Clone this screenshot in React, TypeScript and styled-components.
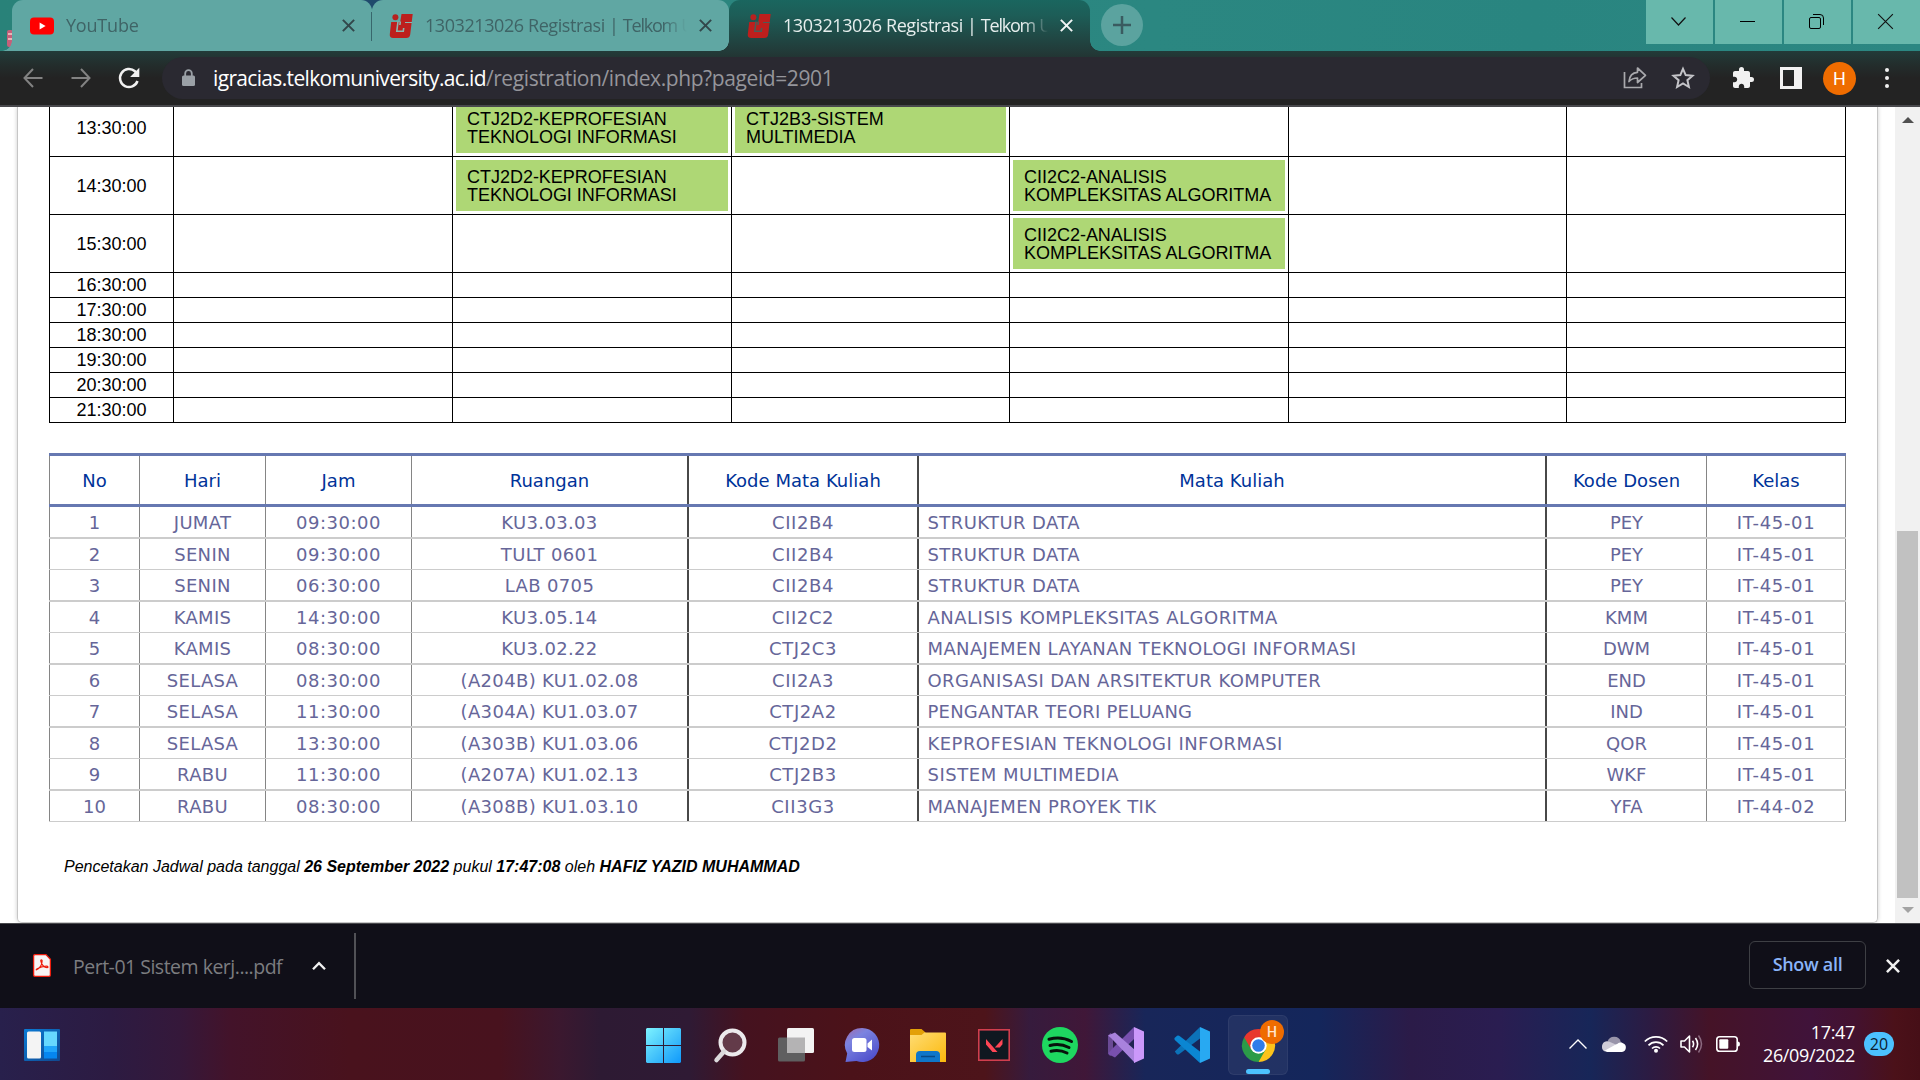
import React from "react";
import styled, { createGlobalStyle, css } from "styled-components";

const uiFont = `"Open Sans", "Noto Sans", sans-serif`;
const arial = `"Liberation Sans", Arial, sans-serif`;
const verdana = `"DejaVu Sans", Verdana, sans-serif`;

const GlobalStyle = createGlobalStyle`
  * { box-sizing: border-box; }
  body { margin: 0; overflow: hidden; background: #fff; }
  svg { display: block; flex: none; overflow: visible; }
`;

const Screen = styled.div`
  width: 1920px;
  height: 1080px;
  display: flex;
  flex-direction: column;
  overflow: hidden;
  font-family: ${uiFont};
`;

/* ---------- Tab strip ---------- */

const TabStrip = styled.div`
  height: 51px;
  flex: none;
  display: flex;
  padding-left: 12px;
  position: relative;
  background: linear-gradient(90deg, #298279 0, #2b8781 60%, #298580 80%, #2c8782 100%);
`;

const StripArt = styled.svg`
  position: absolute;
  left: 0;
  top: 0;
`;

const flare = (color: string) => css`
  &::before,
  &::after {
    content: "";
    position: absolute;
    bottom: 0;
    width: 10px;
    height: 10px;
  }
  &::before {
    left: -10px;
    background: radial-gradient(circle at 0 0, transparent 9.5px, ${color} 10px);
  }
  &::after {
    right: -10px;
    background: radial-gradient(circle at 100% 0, transparent 9.5px, ${color} 10px);
  }
`;

const TabBox = styled.div<{ $width: number; $active?: boolean; $start?: number }>`
  position: relative;
  z-index: ${(p) => (p.$active ? 2 : 1)};
  width: ${(p) => p.$width}px;
  flex: none;
  height: 51px;
  display: flex;
  align-items: center;
  padding: 0 17px 0 ${(p) => p.$start ?? 18}px;
  border-radius: 11px 11px 0 0;
  color: ${(p) => (p.$active ? "#e6eeed" : "#3f6466")};
  background: ${(p) =>
    p.$active ? "linear-gradient(#1a665f 0, #1d5d57 30%, #223b39 100%)" : "#60a7a3"};
  ${(p) => flare(p.$active ? "#223b39" : "#60a7a3")}
`;

const TabTitle = styled.div<{ $spacing: number }>`
  flex: 1;
  min-width: 0;
  margin: 0 12px 1px;
  white-space: nowrap;
  font-size: 18px;
  line-height: 26px;
  letter-spacing: ${(p) => p.$spacing}px;
  mask-image: linear-gradient(90deg, #000 calc(100% - 24px), transparent 100%);
`;

const SiteName = styled.span`
  letter-spacing: -1.2px;
`;

const TabDivider = styled.i`
  position: absolute;
  z-index: 3;
  right: 0;
  top: 12px;
  width: 1px;
  height: 29px;
  background: #38676c;
`;

const NewTab = styled.div`
  width: 42px;
  height: 42px;
  margin: 4px 0 0 11px;
  border-radius: 50%;
  display: grid;
  place-items: center;
  background: #5ba39f;
`;

const WindowButtons = styled.div`
  margin-left: auto;
  display: flex;
  gap: 2px;
  height: 44px;
`;

const WindowButton = styled.div`
  width: 67px;
  display: grid;
  place-items: center;
  padding: 0 2px 1px 0;
  background: #68b8ac;
`;

/* ---------- Toolbar ---------- */

const Toolbar = styled.div`
  height: 56px;
  flex: none;
  display: flex;
  align-items: center;
  padding: 0 27px 0 21px;
  border-bottom: 2px solid #48484c;
  background: linear-gradient(#223b39 0, #232d2c 14px, #232323 27px);
`;

const NavGroup = styled.div`
  display: flex;
  align-items: center;
  gap: 24px;
  width: 141px;
`;

const Omnibox = styled.div`
  width: 1548px;
  height: 42px;
  border-radius: 21px;
  display: flex;
  align-items: center;
  padding: 0 15px 0 20px;
  background: #2a2931;
`;

const Url = styled.div`
  margin-left: 18px;
  flex: 1;
  font-size: 21px;
  line-height: 30px;
  letter-spacing: -0.4px;
  white-space: nowrap;
  color: #95959b;
  b {
    font-weight: 400;
    letter-spacing: -0.66px;
    color: #fff;
  }
`;

const OmniActions = styled.div`
  display: flex;
  align-items: center;
  gap: 24px;
`;

const ToolbarActions = styled.div`
  flex: 1;
  display: flex;
  align-items: center;
  margin-left: 21px;
  gap: 25px;
`;

const Avatar = styled.div`
  width: 33px;
  height: 33px;
  border-radius: 50%;
  margin-left: -4px;
  display: grid;
  place-items: center;
  background: #ef6c00;
  color: #fff;
  font: 400 18px/33px Roboto, sans-serif;
`;

const Dots = styled.div`
  margin-left: 4px;
  display: grid;
  gap: 4px;
  i {
    width: 4px;
    height: 4px;
    border-radius: 50%;
    background: #f1f1f1;
  }
`;

/* ---------- Page ---------- */

const Viewport = styled.div`
  height: 816px;
  flex: none;
  display: flex;
  overflow: hidden;
  background: #fff;
`;

const Card = styled.main`
  width: 1861px;
  height: 816px;
  margin-left: 17px;
  padding: 0 31px;
  border: 1px solid #c6c6c6;
  border-top: 0;
  border-radius: 0 0 5px 5px;
  box-shadow: 0 0 4px #ccc;
  display: flex;
  flex-direction: column;
`;

const ScrollTrack = styled.div`
  width: 25px;
  margin-left: auto;
  display: flex;
  flex-direction: column;
  align-items: center;
  background: #f1f1f1;
`;

const ScrollThumb = styled.div`
  width: 21px;
  height: 367px;
  margin-top: 408px;
  background: #c1c1c1;
`;

const ScrollArrow = styled.i<{ $up?: boolean }>`
  margin-top: ${(p) => (p.$up ? 10 : 9)}px;
  width: 0;
  height: 0;
  border: 6px solid transparent;
  ${(p) =>
    p.$up
      ? "border-top: 0; border-bottom-color: #505050;"
      : "border-bottom: 0; border-top-color: #a3a3a3;"}
`;

const Schedule = styled.div`
  width: 1797px;
  margin-top: -8px;
  flex: none;
  border-left: 1px solid #000;
  font: 18px/18px ${arial};
  color: #000;
`;

const ScheduleRow = styled.div<{ $tall?: boolean }>`
  display: grid;
  grid-template-columns: 124px 279px 279px 278px 279px 278px 279px;
  height: ${(p) => (p.$tall ? 58 : 25)}px;
`;

const Slot = styled.div`
  border-right: 1px solid #000;
  border-bottom: 1px solid #000;
  padding: 3px;
`;

const TimeSlot = styled(Slot)`
  display: flex;
  align-items: center;
  justify-content: center;
  padding: 0;
`;

const Course = styled.div`
  height: 100%;
  padding: 0 10px 0 11px;
  display: flex;
  align-items: center;
  white-space: pre;
  letter-spacing: -0.02px;
  background: #aed775;
`;

const InfoTable = styled.div`
  margin-top: 30px;
  flex: none;
  width: 1797px;
  font: 18px/24px ${verdana};
  color: #666699;
`;

const infoColumns = "91px 126px 146px 277px 230px 628px 160px 139px";

const InfoHead = styled.div`
  display: grid;
  grid-template-columns: ${infoColumns};
  height: 54px;
  border-top: 3px solid #6678b1;
  border-bottom: 3px solid #6678b1;
  color: #003399;
`;

const InfoRow = styled.div<{ $thick: boolean }>`
  display: grid;
  grid-template-columns: ${infoColumns};
  height: ${(p) => (p.$thick ? 32 : 31)}px;
  border-bottom: ${(p) => (p.$thick ? 2 : 1)}px solid #ccc;
`;

const InfoCell = styled.div<{ $spacing: number; $dark?: boolean; $left?: boolean; $first?: boolean }>`
  display: flex;
  align-items: center;
  justify-content: ${(p) => (p.$left ? "flex-start" : "center")};
  padding: 2px 0 0 ${(p) => (p.$left ? 8.5 : 0)}px;
  border-right: ${(p) => (p.$dark ? "2px solid #484848" : "1px solid #858585")};
  border-left: ${(p) => (p.$first ? "1px solid #858585" : "0")};
  letter-spacing: ${(p) => p.$spacing}px;
  white-space: nowrap;
`;

const PrintNote = styled.p`
  margin: 34px 0 0 15px;
  font: italic 16px/22px ${arial};
  color: #000;
  white-space: nowrap;
`;

/* ---------- Download shelf ---------- */

const Shelf = styled.div`
  height: 85px;
  flex: none;
  display: flex;
  align-items: center;
  padding: 0 20px 1px 33px;
  border-top: 1px solid #48484c;
  background: #100f18;
`;

const FileName = styled.div`
  margin: 2px 28px 0 22px;
  width: 211px;
  font-size: 19.5px;
  line-height: 28px;
  letter-spacing: -0.5px;
  color: #7c7d80;
  white-space: nowrap;
`;

const ShelfDivider = styled.i`
  width: 2px;
  height: 66px;
  margin-left: 28px;
  background: #515156;
`;

const ShowAll = styled.div`
  margin-left: auto;
  margin-right: 20px;
  width: 117px;
  height: 48px;
  margin-bottom: 1px;
  border: 1px solid #3e3f44;
  border-radius: 6px;
  display: flex;
  align-items: center;
  justify-content: center;
  padding-bottom: 2px;
  font-size: 18px;
  font-weight: 600;
  letter-spacing: -0.3px;
  color: #8ab4f8;
`;

/* ---------- Taskbar ---------- */

const Taskbar = styled.div`
  height: 72px;
  flex: none;
  display: flex;
  align-items: center;
  background: linear-gradient(
    90deg,
    #28204c 0,
    #2c1b42 110px,
    #35183a 180px,
    #43132a 230px,
    #49121d 350px,
    #48121e 500px,
    #3b182f 560px,
    #2d1a33 600px,
    #2f1a34 690px,
    #45121f 745px,
    #4b1219 850px,
    #4d141a 985px,
    #361b3d 1030px,
    #401738 1085px,
    #182659 1145px,
    #14265b 1320px,
    #2b1b48 1410px,
    #2a1d51 1500px,
    #172658 1590px,
    #2c1b42 1650px,
    #451327 1710px,
    #40133a 1810px,
    #43122f 1855px,
    #4b1119 1895px,
    #460f17 1920px
  );
`;

const WidgetsButton = styled.div`
  margin: 2px 0 0 24px;
  width: 607px;
`;

const Apps = styled.div`
  display: flex;
`;

const AppButton = styled.div<{ $active?: boolean }>`
  width: ${(p) => (p.$active ? 60 : 66)}px;
  height: 60px;
  margin: 2px ${(p) => (p.$active ? 3 : 0)}px 0;
  position: relative;
  display: grid;
  place-items: center;
  ${(p) =>
    p.$active &&
    `background: rgba(255,255,255,.06); border: 1px solid rgba(255,255,255,.05); border-radius: 6px;`}
`;

const AppBadge = styled.span`
  position: absolute;
  left: 31px;
  top: 4px;
  width: 24px;
  height: 24px;
  border-radius: 50%;
  background: #ef6c00;
  color: #ffe4cc;
  text-align: center;
  font: 500 14px/24px Roboto, sans-serif;
`;

const RunningMark = styled.i`
  position: absolute;
  left: 17px;
  bottom: 0;
  width: 24px;
  height: 5px;
  border-radius: 3px;
  background: #4cc2ff;
`;

const Tray = styled.div`
  margin-left: auto;
  margin-right: 26px;
  display: flex;
  align-items: center;
`;

const TrayIcon = styled.div<{ $gap: number }>`
  margin-right: ${(p) => p.$gap}px;
`;

const Clock = styled.div`
  width: 100px;
  text-align: right;
  font-size: 18px;
  line-height: 23px;
  letter-spacing: -0.35px;
  color: #fff;
  white-space: nowrap;
`;

const Notifications = styled.div`
  margin-left: 9px;
  width: 30px;
  height: 24px;
  border-radius: 12px;
  background: #4cc2ff;
  color: #0c2030;
  font-size: 16px;
  line-height: 24px;
  text-align: center;
`;

/* ---------- Icons ---------- */

const Cross = ({ size, color, width = 2 }: { size: number; color: string; width?: number }) => (
  <svg width={size} height={size} viewBox="0 0 12 12">
    <path d="M0.8 0.8 11.2 11.2M11.2 0.8 0.8 11.2" stroke={color} strokeWidth={(width * 12) / size} />
  </svg>
);

const YouTubeIcon = () => (
  <svg width="24" height="24" viewBox="0 0 24 24">
    <rect y="3.6" width="24" height="16.8" rx="4" fill="#f00" />
    <path d="M9.6 8.6v6.8l6-3.4z" fill="#fff" />
  </svg>
);

const IgIcon = ({ cut }: { cut: string }) => (
  <svg width="24" height="24" viewBox="0 0 24 24">
    <circle cx="6.4" cy="3.2" r="3" fill="#b7211f" />
    <path d="M12.500 0h11.200L22.700 8 21.200 20.500q-.5 3.500-4 3.500H4.200Q.3 24 .8 20.300L2.200 8h9z" fill="#bd1f1d" />
    <path d="M9 7.500 7.800 17.200h6.500l.4-3.200M11.300 7.500l-.4 3.500" fill="none" stroke={cut} strokeWidth="1.600" />
    <path d="M16 8.500h7" stroke={cut} strokeWidth="1" />
  </svg>
);

const BackIcon = ({ flip }: { flip?: boolean }) => (
  <svg width="24" height="24" viewBox="0 0 24 24">
    <path
      d="M21.500 12H4M12 3 3.500 12l8.500 9"
      transform={flip ? "translate(24 0) scale(-1 1)" : undefined}
      fill="none"
      stroke="#828282"
      strokeWidth="2"
    />
  </svg>
);

const ReloadIcon = () => (
  <svg width="24" height="24" viewBox="0 0 24 24">
    <path d="M20.500 15A9 9 0 1 1 18 5.300L20.500 8" fill="none" stroke="#f1f1f1" strokeWidth="2.500" />
    <path d="M22.300 1.800v9.200h-9.200z" fill="#f1f1f1" />
  </svg>
);

const LockIcon = () => (
  <svg width="13" height="18" viewBox="0 0 13 18">
    <rect y="6.500" width="13" height="10.500" rx="1.500" fill="#9aa0a6" />
    <path d="M3.200 7V4.500a3.300 3.300 0 0 1 6.600 0V7" fill="none" stroke="#9aa0a6" strokeWidth="1.800" />
  </svg>
);

const ShareIcon = () => (
  <svg width="24" height="24" viewBox="0 0 24 24">
    <path d="M1.500 6v15.500H18.500V17" fill="none" stroke="#a9a9ad" strokeWidth="1.700" />
    <path
      d="M6 15.500C6.500 9.500 10 6.600 14.500 6.300V2l8 7.300-8 7.200V12c-3.700 0-6.300 1-8.500 3.500z"
      fill="none"
      stroke="#a9a9ad"
      strokeWidth="1.700"
      strokeLinejoin="round"
    />
  </svg>
);

const StarIcon = () => (
  <svg width="24" height="24" viewBox="0 0 24 24">
    <path
      d="M12 2.800 14.700 9.100 21.500 9.700 16.400 14.200 17.900 21 12 17.400 6.100 21 7.600 14.200 2.500 9.700 9.300 9.100z"
      fill="none"
      stroke="#c4c4c8"
      strokeWidth="2"
    />
  </svg>
);

const PuzzleIcon = () => (
  <svg width="24" height="24" viewBox="0 0 24 24">
    <path
      d="M20.500 11H19V7c0-1.100-.9-2-2-2h-4V3.500a2.500 2.500 0 0 0-5 0V5H4c-1.100 0-1.990.9-1.990 2v3.800H3.500c1.490 0 2.700 1.210 2.700 2.700s-1.210 2.700-2.700 2.700H2V20c0 1.100.9 2 2 2h3.800v-1.500c0-1.490 1.210-2.700 2.700-2.700s2.700 1.210 2.700 2.700V22H17c1.100 0 2-.9 2-2v-4h1.500a2.500 2.500 0 0 0 0-5z"
      fill="#f1f1f1"
    />
  </svg>
);

const PanelIcon = () => (
  <svg width="22" height="22" viewBox="0 0 22 22">
    <path fillRule="evenodd" d="M0 0h22v22H0zM3 3v16h11V3z" fill="#f1f1f1" />
  </svg>
);

const PdfIcon = () => (
  <svg width="18" height="23" viewBox="0 0 18 23">
    <path d="M2 .6h11l4.400 4.600V21q0 1.400-1.400 1.400H2Q.6 22.400.6 21V2Q.6.6 2 .6z" fill="#f7f5f5" stroke="#ee1c0c" strokeWidth="1.300" />
    <path
      d="M3.500 15.800c3-1.600 5.500-5.300 5.600-8.800 0-1.800-1.500-1.500-1.300 0 .6 3.500 3.300 6.700 6.300 6.700 1.500-.2 1-1.500-.6-1.500-3.200 0-6.700 1-9.300 2.600-.9.600-1.300 1.300-.7 1z"
      fill="none"
      stroke="#ee1c0c"
      strokeWidth="1.200"
    />
  </svg>
);

const WidgetsIcon = () => (
  <svg width="36" height="32" viewBox="0 0 36 32">
    <defs>
      <linearGradient id="wd" x2="1" y2="1">
        <stop stopColor="#0a7bd6" />
        <stop offset="1" stopColor="#11488f" />
      </linearGradient>
    </defs>
    <rect width="36" height="32" rx="1" fill="url(#wd)" />
    <rect x="3" y="2.500" width="14" height="27" rx="1.500" fill="#f4f4f4" />
    <path d="M20 2.500h13V17H20z" fill="#66d8ff" />
    <path d="M20 17h13v6H20z" fill="#1fa5fb" />
    <path d="M20 23h13v6.500H20z" fill="#0586f0" />
  </svg>
);

const StartIcon = () => (
  <svg width="36" height="35" viewBox="0 0 36 35">
    <defs>
      <linearGradient id="st" gradientUnits="userSpaceOnUse" x1="0" y1="0" x2="35" y2="35">
        <stop stopColor="#7df3ff" />
        <stop offset=".5" stopColor="#47c5fb" />
        <stop offset="1" stopColor="#0f99fb" />
      </linearGradient>
    </defs>
    <path d="M1 0h16v17H0V1zM18 0h16l1 1v16H18zM0 18h17v17H1l-1-1zM18 18h17v16l-1 1H18z" fill="url(#st)" />
  </svg>
);

const SearchIcon = () => (
  <svg width="33" height="34" viewBox="0 0 33 34">
    <circle cx="18.500" cy="14.500" r="12" fill="#633b49" stroke="#eceaec" strokeWidth="4" />
    <path d="M10 23.500 2.500 32" stroke="#dcdadc" strokeWidth="4.500" strokeLinecap="round" />
  </svg>
);

const TaskViewIcon = () => (
  <svg width="36" height="34" viewBox="0 0 36 34">
    <rect y="9.500" width="27" height="24" rx="1.500" fill="#5f5f60" />
    <rect x="9" width="27" height="25" rx="1.500" fill="#f3f3f3" />
    <path d="M9 9.500h18V25H9z" fill="#b4b3b4" />
  </svg>
);

const ChatIcon = () => (
  <svg width="34" height="34" viewBox="0 0 34 34">
    <defs>
      <linearGradient id="ch" x2=".7" y2="1">
        <stop stopColor="#a06aaa" />
        <stop offset=".35" stopColor="#7b83e0" />
        <stop offset="1" stopColor="#4f50cc" />
      </linearGradient>
    </defs>
    <path d="M17 0a17 17 0 1 1-5.500 33L.5 34l1.700-8.500A17 17 0 0 1 17 0z" fill="url(#ch)" />
    <rect x="7" y="10" width="14.500" height="14" rx="2.500" fill="#fff" />
    <path d="M22.500 15.500 27 11.500v11L22.500 19z" fill="#fff" />
  </svg>
);

const FolderIcon = () => (
  <svg width="36" height="33" viewBox="0 0 36 33">
    <defs>
      <linearGradient id="fo" x2="1" y2="1">
        <stop stopColor="#ffdc74" />
        <stop offset="1" stopColor="#fbb90c" />
      </linearGradient>
    </defs>
    <path d="M0 1q0-1 1-1h10.500l4 3.500V8H0z" fill="#e3a008" />
    <path d="M0 6h11.500l3-2.500H35q1 0 1 1V33H0z" fill="url(#fo)" />
    <path d="M6 33v-7q0-4 4-4h16q4 0 4 4v7z" fill="#0f76c9" />
    <path d="M11 27.500h14" stroke="#084a86" strokeWidth="1.500" />
  </svg>
);

const ValorantIcon = () => (
  <svg width="32" height="32" viewBox="0 0 32 32">
    <rect x=".8" y=".8" width="30.400" height="30.400" fill="#101820" stroke="#d13e4e" strokeWidth="1.600" />
    <path d="M8 10v5.500l6.500 7.500h5zM24.500 10 16.800 18.500h5l2.700-3.200z" fill="#ff4655" />
  </svg>
);

const SpotifyIcon = () => (
  <svg width="36" height="36" viewBox="0 0 36 36">
    <circle cx="18" cy="18" r="18" fill="#1ed760" />
    <path
      d="M7 12.300q12-3.500 22.500 2.200M8 18.500q10-2.700 19 2M9 24.200q8.500-2 16 1.800"
      fill="none"
      stroke="#07130b"
      strokeWidth="3"
      strokeLinecap="round"
    />
  </svg>
);

const VisualStudioIcon = () => (
  <svg width="36" height="36" viewBox="0 0 36 36">
    <path d="M0 8.500 2.500 6 5 8v19l-3 2-2-3z" fill="#6a4a95" />
    <path d="M3.500 22.500 26 0v12L7 30.500 0 27z" fill="#7850ae" />
    <path d="M0 8.500 7 5.500 27 23v13L3 11z" fill="#a982dd" />
    <path d="M26 0 36 4.500v27L26 36z" fill="#cb98fa" />
  </svg>
);

const CodeIcon = () => (
  <svg width="36" height="36" viewBox="0 0 36 36">
    <path d="M.8 24.500 26 0v11.500L5 27.200q-1.200.9-2.300-.2z" fill="#0c72b8" />
    <path d="M.8 10.800 3 8.800q1-.8 2.200 0L26 24.500V36L.8 13q-1-1.100 0-2.200z" fill="#0b86d2" />
    <path d="M26 0 36 4.500v27L26 36z" fill="#28a9f2" />
  </svg>
);

const ChromeIcon = () => (
  <svg width="33" height="33" viewBox="-16.500 -16.500 33 33">
    <path d="M0 0-14.290-8.250A16.500 16.500 0 0 1 14.290-8.250z" fill="#e8372c" />
    <path d="M0 0 14.290-8.250A16.500 16.500 0 0 1 0 16.500z" fill="#fcc31b" />
    <path d="M0 0V16.500A16.500 16.500 0 0 1-14.290-8.250z" fill="#2b9b48" />
    <path d="M0-8.250H14.290L7.200 4.100z" fill="#fcc31b" />
    <path d="M7.200 4.100 0 16.500-7.200 4.100z" fill="#2b9b48" />
    <path d="M-7.200 4.100-14.290-8.250 0-8.250z" fill="#e8372c" />
    <circle r="8.200" fill="#fff" />
    <circle r="6.300" fill="#2f7de9" />
  </svg>
);

const CloudIcon = () => (
  <svg width="24" height="16" viewBox="0 0 24 16">
    <path d="M5.500 5.500a7 7 0 0 1 13.300.2L13 9z" fill="#9995aa" />
    <path d="M0 10.500a5.200 5.200 0 0 1 7.500-4.800L15 9 3 15.500A5 5 0 0 1 0 10.500z" fill="#cfccd8" />
    <path d="M2.500 14.800 16 7.200q2.300-1.700 5 0A4.600 4.600 0 0 1 20 16H5z" fill="#fff" />
  </svg>
);

const WifiIcon = () => (
  <svg width="24" height="18" viewBox="0 0 24 18">
    <path d="M.8 6.500a15.800 15.800 0 0 1 22.400 0M4.500 10.300a10.500 10.500 0 0 1 15 0M8 13.500a5.800 5.800 0 0 1 8 0" fill="none" stroke="#fff" strokeWidth="1.700" />
    <circle cx="12" cy="15.700" r="2" fill="#fff" />
  </svg>
);

const VolumeIcon = () => (
  <svg width="24" height="20" viewBox="0 0 24 20">
    <path d="M1 7h3.500L9.500 2v16l-5-5H1z" fill="none" stroke="#fff" strokeWidth="1.600" strokeLinejoin="round" />
    <path d="M12.500 6.700q2.200 3.300 0 6.600M15.500 4q4.200 6 0 12" fill="none" stroke="#fff" strokeWidth="1.600" />
    <path d="M18.500 1.500q6 8.500 0 17" fill="none" stroke="#8c6a80" strokeWidth="1.500" />
  </svg>
);

const BatteryIcon = () => (
  <svg width="24" height="16" viewBox="0 0 24 16">
    <rect x=".8" y=".8" width="20.400" height="14.400" rx="2.800" fill="none" stroke="#fff" strokeWidth="1.600" />
    <rect x="3.300" y="3.300" width="9" height="9.400" rx="1" fill="#fff" />
    <path d="M22 5.500q2 0 2 2.500t-2 2.500z" fill="#fff" />
  </svg>
);

/* ---------- Data ---------- */

type Entry = { time: string; tall?: boolean; courses?: Record<number, string> };

const schedule: Entry[] = [
  {
    time: "13:30:00",
    tall: true,
    courses: { 1: "CTJ2D2-KEPROFESIAN\nTEKNOLOGI INFORMASI", 2: "CTJ2B3-SISTEM\nMULTIMEDIA" },
  },
  {
    time: "14:30:00",
    tall: true,
    courses: { 1: "CTJ2D2-KEPROFESIAN\nTEKNOLOGI INFORMASI", 3: "CII2C2-ANALISIS\nKOMPLEKSITAS ALGORITMA" },
  },
  { time: "15:30:00", tall: true, courses: { 3: "CII2C2-ANALISIS\nKOMPLEKSITAS ALGORITMA" } },
  { time: "16:30:00" },
  { time: "17:30:00" },
  { time: "18:30:00" },
  { time: "19:30:00" },
  { time: "20:30:00" },
  { time: "21:30:00" },
];

const headings = ["No", "Hari", "Jam", "Ruangan", "Kode Mata Kuliah", "Mata Kuliah", "Kode Dosen", "Kelas"];

const classes = [
  ["1", "JUMAT", "09:30:00", "KU3.03.03", "CII2B4", "STRUKTUR DATA", "PEY", "IT-45-01"],
  ["2", "SENIN", "09:30:00", "TULT 0601", "CII2B4", "STRUKTUR DATA", "PEY", "IT-45-01"],
  ["3", "SENIN", "06:30:00", "LAB 0705", "CII2B4", "STRUKTUR DATA", "PEY", "IT-45-01"],
  ["4", "KAMIS", "14:30:00", "KU3.05.14", "CII2C2", "ANALISIS KOMPLEKSITAS ALGORITMA", "KMM", "IT-45-01"],
  ["5", "KAMIS", "08:30:00", "KU3.02.22", "CTJ2C3", "MANAJEMEN LAYANAN TEKNOLOGI INFORMASI", "DWM", "IT-45-01"],
  ["6", "SELASA", "08:30:00", "(A204B) KU1.02.08", "CII2A3", "ORGANISASI DAN ARSITEKTUR KOMPUTER", "END", "IT-45-01"],
  ["7", "SELASA", "11:30:00", "(A304A) KU1.03.07", "CTJ2A2", "PENGANTAR TEORI PELUANG", "IND", "IT-45-01"],
  ["8", "SELASA", "13:30:00", "(A303B) KU1.03.06", "CTJ2D2", "KEPROFESIAN TEKNOLOGI INFORMASI", "QOR", "IT-45-01"],
  ["9", "RABU", "11:30:00", "(A207A) KU1.02.13", "CTJ2B3", "SISTEM MULTIMEDIA", "WKF", "IT-45-01"],
  ["10", "RABU", "08:30:00", "(A308B) KU1.03.10", "CII3G3", "MANAJEMEN PROYEK TIK", "YFA", "IT-44-02"],
];

const columnSpacing = [0, 0.3, 0.5, 0.35, 0.6, 0.4, 0, 0.65];
const courseSpacing = [0.4, 0.4, 0.4, 0.5, 0.37, 0.42, 0.21, 0.45, 0.52, 0.4];
const darkAfter = [3, 4, 5];

/* ---------- Sections ---------- */

const Tabs = () => (
  <TabStrip>
    <StripArt width="400" height="51">
      <path d="M360 0h24l-12 9z" fill="#1f4a6c" />
      <rect x="7" y="30" width="6" height="17" rx="2" fill="#c4607a" />
      <path d="M8 34h4M8 39h4" stroke="#e9b5b5" strokeWidth="2" />
    </StripArt>
    <TabBox $width={360}>
      <YouTubeIcon />
      <TabTitle $spacing={-0.2}>YouTube</TabTitle>
      <Cross size={13} color="#32474b" />
      <TabDivider />
    </TabBox>
    <TabBox $width={357} $start={17}>
      <IgIcon cut="#8ab5ae" />
      <TabTitle $spacing={-0.42}>
        1303213026 Registrasi | <SiteName>Telkom</SiteName> U
      </TabTitle>
      <Cross size={13} color="#32474b" />
    </TabBox>
    <TabBox $width={361} $active>
      <IgIcon cut="#4f5a55" />
      <TabTitle $spacing={-0.42}>
        1303213026 Registrasi | <SiteName>Telkom</SiteName> U
      </TabTitle>
      <Cross size={13} color="#f1f5f5" />
    </TabBox>
    <NewTab>
      <svg width="18" height="18" viewBox="0 0 18 18">
        <path d="M9 0v18M0 9h18" stroke="#3a5b60" strokeWidth="2.500" />
      </svg>
    </NewTab>
    <WindowButtons>
      <WindowButton>
        <svg width="15" height="9" viewBox="0 0 15 9">
          <path d="M.5.5l7 7.500 7-7.500" fill="none" stroke="#111" strokeWidth="1.200" />
        </svg>
      </WindowButton>
      <WindowButton>
        <svg width="15" height="1" viewBox="0 0 15 1">
          <path d="M0 .5h15" stroke="#000" />
        </svg>
      </WindowButton>
      <WindowButton>
        <svg width="15" height="15" viewBox="0 0 15 15">
          <rect x=".5" y="3.500" width="11" height="11" rx="1.500" fill="none" stroke="#000" />
          <path d="M4 .5h7q3.500 0 3.500 3.500v7" fill="none" stroke="#000" />
        </svg>
      </WindowButton>
      <WindowButton>
        <Cross size={17} color="#111" width={1.1} />
      </WindowButton>
    </WindowButtons>
  </TabStrip>
);

const AddressBar = () => (
  <Toolbar>
    <NavGroup>
      <BackIcon />
      <BackIcon flip />
      <ReloadIcon />
    </NavGroup>
    <Omnibox>
      <LockIcon />
      <Url>
        <b>igracias.telkomuniversity.ac.id</b>/registration/index.php?pageid=2901
      </Url>
      <OmniActions>
        <ShareIcon />
        <StarIcon />
      </OmniActions>
    </Omnibox>
    <ToolbarActions>
      <PuzzleIcon />
      <PanelIcon />
      <Avatar>H</Avatar>
      <Dots>
        <i />
        <i />
        <i />
      </Dots>
    </ToolbarActions>
  </Toolbar>
);

const Page = () => (
  <Viewport>
    <Card>
      <Schedule>
        {schedule.map((row) => (
          <ScheduleRow key={row.time} $tall={row.tall}>
            <TimeSlot>{row.time}</TimeSlot>
            {[0, 1, 2, 3, 4, 5].map((day) => (
              <Slot key={day}>{row.courses?.[day] && <Course>{row.courses[day]}</Course>}</Slot>
            ))}
          </ScheduleRow>
        ))}
      </Schedule>
      <InfoTable>
        <InfoHead>
          {headings.map((text, i) => (
            <InfoCell key={text} $spacing={0.03} $dark={darkAfter.includes(i)} $first={i === 0}>
              {text}
            </InfoCell>
          ))}
        </InfoHead>
        {classes.map((row, r) => (
          <InfoRow key={row[0]} $thick={r % 2 === 0}>
            {row.map((text, i) => (
              <InfoCell
                key={i}
                $spacing={i === 5 ? courseSpacing[r] : columnSpacing[i]}
                $dark={darkAfter.includes(i)}
                $first={i === 0}
                $left={i === 5}
              >
                {text}
              </InfoCell>
            ))}
          </InfoRow>
        ))}
      </InfoTable>
      <PrintNote>
        Pencetakan Jadwal pada tanggal <b>26 September 2022</b> pukul <b>17:47:08</b> oleh{" "}
        <b>HAFIZ YAZID MUHAMMAD</b>
      </PrintNote>
    </Card>
    <ScrollTrack>
      <ScrollArrow $up />
      <ScrollThumb />
      <ScrollArrow />
    </ScrollTrack>
  </Viewport>
);

const Downloads = () => (
  <Shelf>
    <PdfIcon />
    <FileName>Pert-01 Sistem kerj....pdf</FileName>
    <svg width="14" height="8" viewBox="0 0 14 8">
      <path d="M1 7.200 7 1.200l6 6" fill="none" stroke="#f1f1f1" strokeWidth="2.300" />
    </svg>
    <ShelfDivider />
    <ShowAll>Show all</ShowAll>
    <Cross size={14} color="#f1f1f1" width={2.5} />
  </Shelf>
);

const apps = [
  StartIcon,
  SearchIcon,
  TaskViewIcon,
  ChatIcon,
  FolderIcon,
  ValorantIcon,
  SpotifyIcon,
  VisualStudioIcon,
  CodeIcon,
];

const SystemBar = () => (
  <Taskbar>
    <WidgetsButton>
      <WidgetsIcon />
    </WidgetsButton>
    <Apps>
      {apps.map((Icon, i) => (
        <AppButton key={i}>
          <Icon />
        </AppButton>
      ))}
      <AppButton $active>
        <ChromeIcon />
        <AppBadge>H</AppBadge>
        <RunningMark />
      </AppButton>
    </Apps>
    <Tray>
      <TrayIcon $gap={15}>
        <svg width="18" height="10" viewBox="0 0 18 10">
          <path d="M.5 9.500 9 1l8.500 8.500" fill="none" stroke="#fff" strokeWidth="1.400" />
        </svg>
      </TrayIcon>
      <TrayIcon $gap={18}>
        <CloudIcon />
      </TrayIcon>
      <TrayIcon $gap={12}>
        <WifiIcon />
      </TrayIcon>
      <TrayIcon $gap={12}>
        <VolumeIcon />
      </TrayIcon>
      <TrayIcon $gap={15}>
        <BatteryIcon />
      </TrayIcon>
      <Clock>
        17:47
        <br />
        26/09/2022
      </Clock>
      <Notifications>20</Notifications>
    </Tray>
  </Taskbar>
);

export default function App() {
  return (
    <Screen>
      <GlobalStyle />
      <Tabs />
      <AddressBar />
      <Page />
      <Downloads />
      <SystemBar />
    </Screen>
  );
}
